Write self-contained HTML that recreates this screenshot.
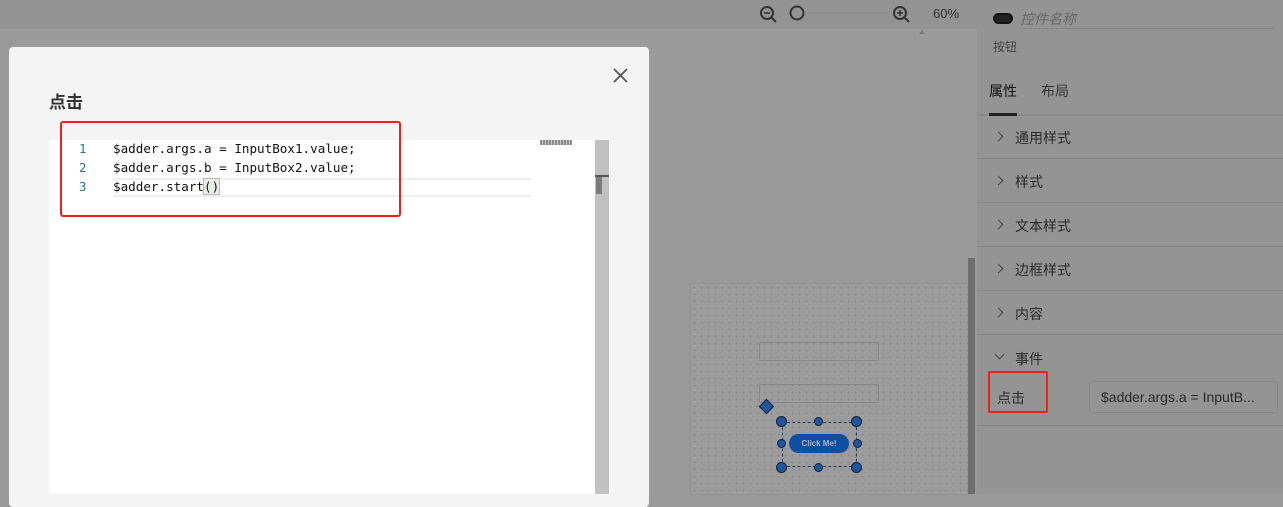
<!DOCTYPE html>
<html><head><meta charset="utf-8"><style>
*{margin:0;padding:0;box-sizing:border-box}
body{width:1283px;height:494px;overflow:hidden;background:#9a9a9a;font-family:"Liberation Sans","Noto Sans CJK SC",sans-serif;position:relative}
.abs{position:absolute}
.top{left:0;top:0;width:977px;height:29px;background:#939393}
.right{left:977px;top:0;width:306px;height:494px;background:#949494}
.sec{position:absolute;left:977px;width:306px;height:44px;border-bottom:1px solid #888;font-size:14px;color:#2a2a2a}
.sec span{position:absolute;left:38px;top:13px}
.sec i{position:absolute;left:18px;top:18px;width:7px;height:7px;border-right:1.5px solid #444;border-top:1.5px solid #444;transform:rotate(45deg)}
.canvas{left:691px;top:284px;width:278px;height:210px;background-color:#9c9c9c;background-image:radial-gradient(#888 0.8px,transparent 1px);background-size:7px 7px;box-shadow:0 0 2px #888}
.modal{left:9px;top:47px;width:640px;height:460px;background:#f4f4f5;border-radius:4px}
.code{font-family:"DejaVu Sans Mono","Liberation Mono",monospace;font-size:12.6px;color:#111;position:absolute;left:113px;white-space:pre}
.ln{position:absolute;left:79px;font-family:"DejaVu Sans Mono",monospace;font-size:12.5px;color:#237893}
.h{position:absolute;width:11px;height:11px;border-radius:50%;background:#1f56a0;border:1px solid #123}
.hs{width:9px;height:9px}
</style></head><body>
<div class="abs top"></div>
<svg class="abs" style="left:758px;top:4px" width="210" height="20">
<circle cx="9" cy="9" r="6" fill="none" stroke="#333" stroke-width="2"/><line x1="13" y1="13" x2="18" y2="18" stroke="#333" stroke-width="2"/><line x1="6" y1="9" x2="12" y2="9" stroke="#333" stroke-width="1.6"/>
<circle cx="39" cy="9" r="6.5" fill="none" stroke="#333" stroke-width="2"/>
<line x1="46" y1="9" x2="130" y2="9" stroke="#888" stroke-width="1"/>
<circle cx="142" cy="9" r="6" fill="none" stroke="#333" stroke-width="2"/><line x1="146" y1="13" x2="151" y2="18" stroke="#333" stroke-width="2"/><line x1="139" y1="9" x2="145" y2="9" stroke="#333" stroke-width="1.6"/><line x1="142" y1="6" x2="142" y2="12" stroke="#333" stroke-width="1.6"/>
<text x="175" y="14" font-size="13" fill="#333" font-family="Liberation Sans">60%</text>
</svg>
<div class="abs" style="left:919px;top:30px;width:4px;height:4px;border-left:3px solid transparent;border-right:3px solid transparent;border-bottom:4px solid #777"></div>
<div class="abs canvas"></div>
<div class="abs" style="left:968px;top:258px;width:7px;height:236px;background:#6e6e6e"></div>
<div class="abs" style="left:759px;top:342px;width:120px;height:19px;border:1px solid #888;border-radius:2px"></div>
<div class="abs" style="left:759px;top:384px;width:120px;height:19px;border:1px solid #888;border-radius:2px"></div>
<div class="abs" style="left:761px;top:401px;width:11px;height:11px;background:#1f56a0;border:1px solid #123;transform:rotate(45deg)"></div>
<div class="abs" style="left:782px;top:422px;width:75px;height:45px;border:1px dashed #1a3a6a"></div>
<div class="abs" style="left:789px;top:434px;width:60px;height:19px;border-radius:10px;background:#0f4ea0;color:#a8b8d0;font-size:8px;font-weight:bold;text-align:center;line-height:19px">Click Me!</div>
<div class="h" style="left:776px;top:416px"></div><div class="h hs" style="left:814px;top:417px"></div><div class="h" style="left:851px;top:416px"></div>
<div class="h hs" style="left:777px;top:439px"></div><div class="h hs" style="left:853px;top:439px"></div>
<div class="h" style="left:776px;top:462px"></div><div class="h hs" style="left:814px;top:463px"></div><div class="h" style="left:851px;top:462px"></div>

<div class="abs right"></div>
<div class="abs" style="left:993px;top:13px;width:20px;height:11px;border-radius:6px;background:#222;border:2px solid #111"></div>
<div class="abs" style="left:1020px;top:9px;font-size:14px;color:#666;font-style:italic">控件名称</div>
<div class="abs" style="left:1019px;top:28px;width:255px;height:1px;background:#888"></div>
<div class="abs" style="left:993px;top:38px;font-size:12px;color:#444">按钮</div>
<div class="abs" style="left:989px;top:81px;font-size:14px;color:#111">属性</div>
<div class="abs" style="left:1041px;top:81px;font-size:14px;color:#333">布局</div>
<div class="abs" style="left:977px;top:114px;width:306px;height:2px;background:#8a8a8a"></div>
<div class="abs" style="left:989px;top:113px;width:28px;height:3px;background:#222"></div>
<div class="sec" style="top:115px"><i></i><span>通用样式</span></div>
<div class="sec" style="top:159px"><i></i><span>样式</span></div>
<div class="sec" style="top:203px"><i></i><span>文本样式</span></div>
<div class="sec" style="top:247px"><i></i><span>边框样式</span></div>
<div class="sec" style="top:291px"><i></i><span>内容</span></div>
<div class="abs" style="left:996px;top:351px;width:7px;height:7px;border-right:1.5px solid #444;border-bottom:1.5px solid #444;transform:rotate(45deg)"></div>
<div class="abs" style="left:1015px;top:349px;font-size:14px;color:#2a2a2a">事件</div>
<div class="abs" style="left:988px;top:371px;width:60px;height:42px;border:2px solid #f02018;border-radius:2px"></div>
<div class="abs" style="left:997px;top:388px;font-size:14px;color:#2a2a2a">点击</div>
<div class="abs" style="left:1089px;top:381px;width:189px;height:32px;border:1px solid #888;border-radius:3px;font-size:14px;color:#2a2a2a;padding:7px 0 0 11px">$adder.args.a = InputB...</div>
<div class="abs" style="left:977px;top:425px;width:306px;height:1px;background:#888"></div>

<div class="abs modal"></div>
<svg class="abs" style="left:613px;top:68px" width="15" height="15"><path d="M1 1L14 14M14 1L1 14" stroke="#555" stroke-width="1.8"/></svg>
<div class="abs" style="left:49px;top:88px;font-size:17px;font-weight:bold;color:#333">点击</div>
<div class="abs" style="left:49px;top:140px;width:546px;height:354px;background:#fff"></div>
<div class="abs" style="left:595px;top:140px;width:14px;height:354px;background:#c1c1c1"></div>
<div class="abs" style="left:595px;top:175px;width:14px;height:2px;background:#555"></div>
<div class="abs" style="left:596px;top:177px;width:6px;height:17px;background:#7c7c7c"></div>
<div class="abs" style="left:540px;top:140px;width:32px;height:5px;background:repeating-linear-gradient(90deg,#888 0 2px,#ccc 2px 3px)"></div>
<div class="abs" style="left:113px;top:178px;width:418px;height:19px;border-top:2px solid #eee;border-bottom:2px solid #eee"></div>
<div class="ln" style="top:141px">1</div><div class="code" style="top:141px">$adder.args.a = InputBox1.value;</div>
<div class="ln" style="top:160px">2</div><div class="code" style="top:160px">$adder.args.b = InputBox2.value;</div>
<div class="ln" style="top:179px">3</div><div class="code" style="top:179px">$adder.start<span style="background:#e8ede8;outline:1px solid #bbb">()</span></div>
<div class="abs" style="left:60px;top:121px;width:341px;height:96px;border:2px solid #f02018;border-radius:3px"></div>
</body></html>
